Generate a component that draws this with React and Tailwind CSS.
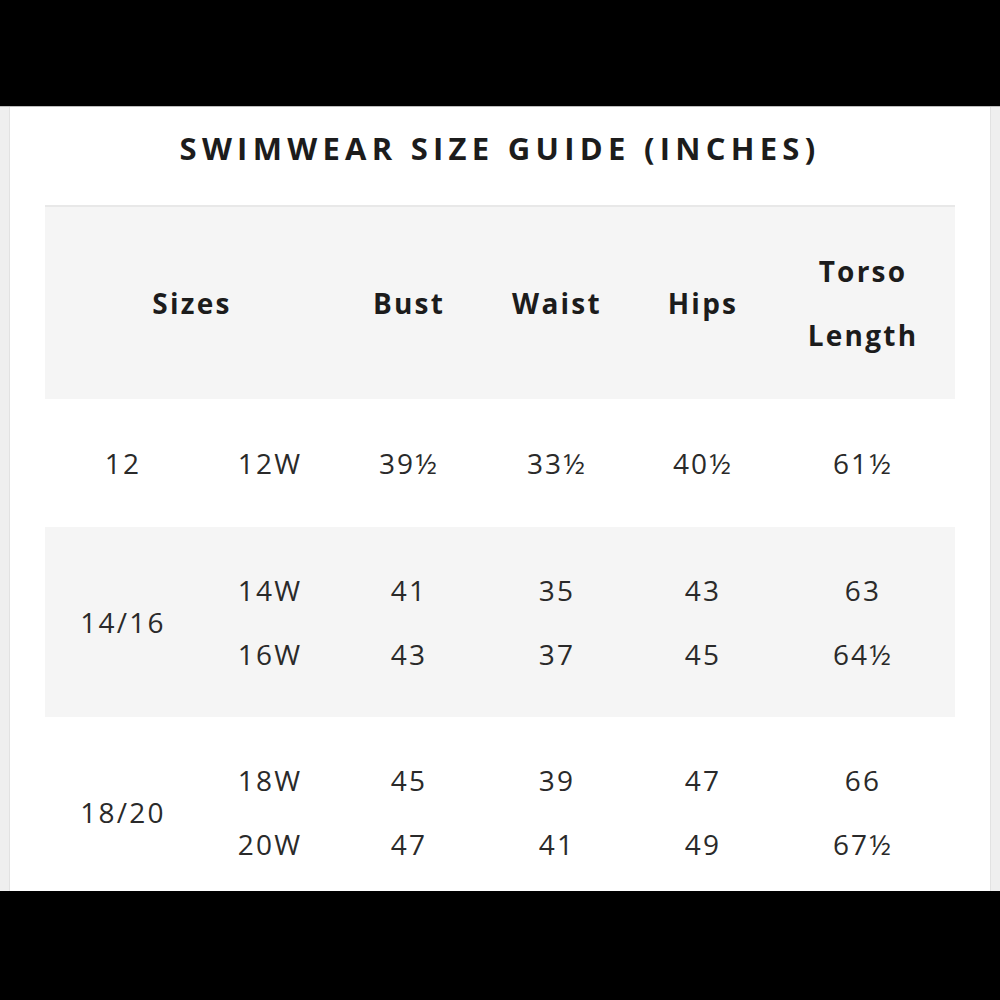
const COLS = ['w-[156px]', 'w-[138px]', 'w-[140px]', 'w-[156px]', 'w-[136px]', 'w-[184px]'];

const ROWS = [
  { size: '12', lines: [['12W', '39½', '33½', '40½', '61½']], gray: false, h: 'h-[128px]' },
  {
    size: '14/16',
    lines: [
      ['14W', '41', '35', '43', '63'],
      ['16W', '43', '37', '45', '64½'],
    ],
    gray: true,
    h: 'h-[190px]',
  },
  {
    size: '18/20',
    lines: [
      ['18W', '45', '39', '47', '66'],
      ['20W', '47', '41', '49', '67½'],
    ],
    gray: false,
    h: 'h-[190px]',
  },
];

function Row({ row }) {
  return (
    <div className={`flex ${row.h} ${row.gray ? 'bg-[#f5f5f5]' : 'bg-white'}`}>
      <div className={`${COLS[0]} flex items-center justify-center`}>{row.size}</div>
      {COLS.slice(1).map((w, ci) => (
        <div key={ci} className={`${w} flex flex-col items-center justify-center`}>
          {row.lines.map((line, li) => (
            <div key={li} className="h-[64px] flex items-center">
              {line[ci]}
            </div>
          ))}
        </div>
      ))}
    </div>
  );
}

export default function App() {
  return (
    <div className="w-[1000px] h-[1000px] bg-black flex flex-col overflow-hidden" style={{ fontFamily: '"Open Sans", "Liberation Sans", sans-serif' }}>
      <div className="h-[107px] shrink-0 bg-black border-b border-[#bdbdbd]" />
      <div className="h-[784px] shrink-0 bg-[#efefef] pl-[9px] pr-[9px] overflow-hidden">
        <div className="h-full bg-white border-l border-r border-[#e2e2e2] overflow-hidden">
          <h1 className="pt-[18px] h-[98px] text-center text-[31px] font-bold tracking-[0.17em] text-[#1c1c1c] leading-[46px]">
            SWIMWEAR SIZE GUIDE (INCHES)
          </h1>
          <div className="ml-[35px] w-[910px] text-[28px] tracking-[0.08em] text-[#2a2a2a]">
            <div className="flex h-[194px] bg-[#f5f5f5] border-t-2 border-[#e8e8e8] font-bold text-[#1c1c1c]">
              <div className="w-[294px] flex items-center justify-center">Sizes</div>
              <div className={`${COLS[2]} flex items-center justify-center`}>Bust</div>
              <div className={`${COLS[3]} flex items-center justify-center`}>Waist</div>
              <div className={`${COLS[4]} flex items-center justify-center`}>Hips</div>
              <div className={`${COLS[5]} flex flex-col items-center justify-center`}>
                <div className="h-[64px] flex items-center">Torso</div>
                <div className="h-[64px] flex items-center">Length</div>
              </div>
            </div>
            {ROWS.map((row, i) => (
              <Row key={i} row={row} />
            ))}
          </div>
        </div>
      </div>
      <div className="flex-1 bg-black" />
    </div>
  );
}
